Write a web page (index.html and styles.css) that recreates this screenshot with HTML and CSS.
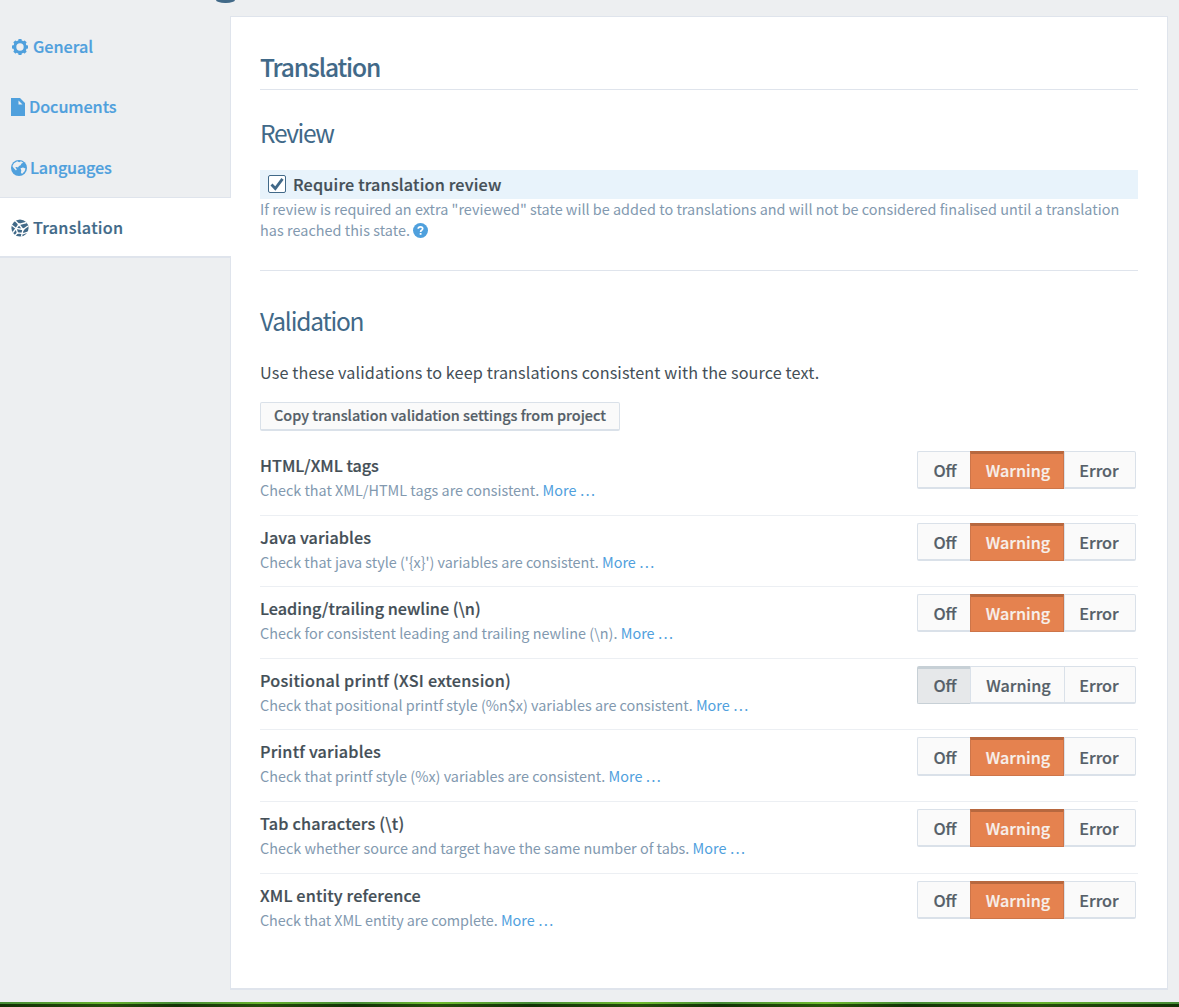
FILE: index.html
```
<!DOCTYPE html>
<html lang="en">
<head>
<meta charset="utf-8">
<title>Translation settings</title>
<link rel="stylesheet" href="styles.css">
</head>
<body>
<div class="page">
  <div class="topbar"><span class="topbar-mark"></span></div>
  <div class="layout">
    <nav class="sidebar">
      <a class="tab"><svg class="icon icon-gear" width="18" height="18" viewBox="0 0 18 18"><g fill="currentColor"><path fill-rule="evenodd" d="M9 2.300a6.700 6.700 0 1 0 0 13.400A6.700 6.700 0 0 0 9 2.300ZM9 5.300a3.700 3.700 0 1 1 0 7.400A3.700 3.700 0 0 1 9 5.300Z"/><g id="teeth"><rect x="7.300" y="1" width="3.400" height="3" rx=".7"/><rect x="7.300" y="14" width="3.400" height="3" rx=".7"/><rect x="1" y="7.300" width="3" height="3.400" rx=".7"/><rect x="14" y="7.300" width="3" height="3.400" rx=".7"/></g><use href="#teeth" transform="rotate(45 9 9)"/></g></svg><span class="label">General</span></a>
      <a class="tab"><svg class="icon icon-doc" width="15" height="18" viewBox="0 0 15 18"><path fill="currentColor" fill-rule="evenodd" d="M0 0h9l5 5v13H0ZM7.500 2.500v4h4Z"/></svg><span class="label t2">Documents</span></a>
      <a class="tab"><svg class="icon icon-globe" width="16" height="16" viewBox="0 0 16 16"><circle cx="8" cy="8" r="8" fill="currentColor"/><path fill="#edeff1" d="M6.200 1.200 8.200 2.200 10 1.300 12.300 2.800 10.500 3.600 9.600 5.200 8 6 7 7.400 5.600 7 4.200 7.600 5.800 9.200 5 10.600 2.600 8 1.400 6 3 3.200ZM9.500 8.200 12 7.600 14.500 8.400 13.600 11.300 11 14 9.900 12.400 10.300 10.600Z"/></svg><span class="label t3">Languages</span></a>
      <a class="tab active"><svg class="icon icon-net" width="18" height="18" viewBox="0 0 18 18"><circle cx="9" cy="9" r="8.600" fill="currentColor"/><g fill="none" stroke="#fff" stroke-width="1.300"><path d="M4 1.500 8 5.500 15.500 3.500M8 5.500 2 13.500M.5 6 5 9.500 12 10.500 17 7M8 5.500 12 10.500 10.500 17.500M5 9.500 6.500 14 12.500 14.500 17 13M6.500 14 3.500 17"/></g><g fill="#fff"><circle cx="8" cy="5.500" r="1.300"/><circle cx="12" cy="10.500" r="1.300"/><circle cx="6.500" cy="14" r="1"/></g></svg><span class="label t4">Translation</span></a>
    </nav>
    <main class="panel">
      <h2 class="title">Translation</h2>
      <h3 class="subtitle review">Review</h3>
      <label class="check-row"><svg width="18" height="18" viewBox="0 0 18 18"><rect x=".5" y=".5" width="17" height="17" rx="1.500" fill="#fff" stroke="#416988"/><path d="M3.500 9.500 7.300 13.500 14.500 3.800" fill="none" stroke="#416988" stroke-width="2.800"/></svg><span class="check-label">Require translation review</span></label>
      <p class="help"><span class="help-one">If review is required an extra "reviewed" state will be added to translations and will not be considered finalised until a translation</span><br><span class="help-two">has reached this state.</span> <svg class="hint" width="15" height="15" viewBox="0 0 15 15"><circle cx="7.500" cy="7.500" r="7.500" fill="#4fa0dd"/><path d="M5.200 5.700Q5.300 3.800 7.500 3.800 9.700 3.800 9.700 5.600 9.700 6.500 8.600 7.200 7.600 7.800 7.600 8.900" fill="none" stroke="#fff" stroke-width="1.700"/><rect x="6.700" y="10" width="1.800" height="1.800" fill="#fff"/></svg></p>
      <h3 class="subtitle validation">Validation</h3>
      <p class="intro">Use these validations to keep translations consistent with the source text.</p>
      <button class="copy"><span>Copy translation validation settings from project</span></button>
      <ul class="rules">
        <li class="rule"><div><h4 class="n1">HTML/XML tags</h4><p><span class="d1">Check that XML/HTML tags are consistent.</span> <a>More …</a></p></div><div class="choice"><span class="off">Off</span><span class="warn on">Warning</span><span class="err">Error</span></div></li>
        <li class="rule"><div><h4 class="n2">Java variables</h4><p><span class="d2">Check that java style ('{x}') variables are consistent.</span> <a>More …</a></p></div><div class="choice"><span class="off">Off</span><span class="warn on">Warning</span><span class="err">Error</span></div></li>
        <li class="rule"><div><h4 class="n3">Leading/trailing newline (\n)</h4><p><span class="d3">Check for consistent leading and trailing newline (\n).</span> <a>More …</a></p></div><div class="choice"><span class="off">Off</span><span class="warn on">Warning</span><span class="err">Error</span></div></li>
        <li class="rule"><div><h4 class="n4">Positional printf (XSI extension)</h4><p><span class="d4">Check that positional printf style (%n$x) variables are consistent.</span> <a>More …</a></p></div><div class="choice"><span class="off on">Off</span><span class="warn">Warning</span><span class="err">Error</span></div></li>
        <li class="rule"><div><h4 class="n5">Printf variables</h4><p><span class="d5">Check that printf style (%x) variables are consistent.</span> <a>More …</a></p></div><div class="choice"><span class="off">Off</span><span class="warn on">Warning</span><span class="err">Error</span></div></li>
        <li class="rule"><div><h4 class="n6">Tab characters (\t)</h4><p><span class="d6">Check whether source and target have the same number of tabs.</span> <a>More …</a></p></div><div class="choice"><span class="off">Off</span><span class="warn on">Warning</span><span class="err">Error</span></div></li>
        <li class="rule"><div><h4 class="n7">XML entity reference</h4><p><span class="d7">Check that XML entity are complete.</span> <a>More …</a></p></div><div class="choice"><span class="off">Off</span><span class="warn on">Warning</span><span class="err">Error</span></div></li>
      </ul>
    </main>
  </div>
  <div class="footer"><div class="footer-edge"></div></div>
</div>
</body>
</html>
```
FILE: styles.css
```
* { box-sizing: border-box; }
body { margin: 0; background: #edeff1; color: #444f57; font-family: "Noto Sans CJK SC", sans-serif; font-size: 16.2px; }
h2, h3, h4, p, ul { margin: 0; padding: 0; }
.page { display: flex; flex-direction: column; height: 1007px; overflow: hidden; }
.topbar { height: 16px; padding-left: 216px; }
.topbar-mark { display: block; width: 19px; height: 3px; background: #416988; border-radius: 0 0 9px 9px / 0 0 3px 3px; }
.layout { display: flex; height: 974px; }
.sidebar { width: 230px; flex: none; }
.tab { display: flex; align-items: center; height: 60px; padding-left: 11px; color: #4fa0dd; font-weight: 500; line-height: 26px; -webkit-text-stroke: .2px; }
.tab:nth-child(3) { height: 61px; }
.tab.active { height: 61px; width: 231px; position: relative; background: #fff; color: #416988; border-top: 1px solid #dfe4ec; border-bottom: 2px solid #dfe4ec; }
.icon { flex: none; margin: 2px 4px 0 0; }
.icon-doc, .icon-globe { margin-right: 3px; }
.t2 { letter-spacing: -.08px; }
.t3 { letter-spacing: -.17px; }
.t4 { letter-spacing: .27px; }
.panel { width: 938px; background: #fff; border: 1px solid #dfe4ec; border-bottom-width: 2px; padding: 32px 29px 0; }
.title { height: 41px; line-height: 36px; font-size: 24.500px; font-weight: 500; letter-spacing: -1.1px; color: #416988; border-bottom: 1px solid #dfe4ec; -webkit-text-stroke: .1px; }
.subtitle { font-size: 24.500px; line-height: 36px; font-weight: 400; letter-spacing: -1.2px; color: #416988; }
.review { margin-top: 25px; letter-spacing: -1.4px; }
.check-row { display: flex; align-items: center; height: 29px; margin-top: 19px; padding: 0 0 1px 8px; gap: 7px; background: #e8f3fb; font-weight: 500; line-height: 26px; -webkit-text-stroke: .2px; }
.check-label { letter-spacing: .18px; }
.help { height: 73px; margin-top: -1px; line-height: 21px; font-size: 14.400px; color: #8299af; white-space: nowrap; }
.help-one { letter-spacing: .018px; }
.help-two { letter-spacing: .05px; }
.hint { vertical-align: -1.5px; }
.validation { border-top: 1px solid #dfe4ec; padding-top: 32px; margin-top: -1px; }
.intro { margin-top: 20px; line-height: 26px; letter-spacing: .125px; }
.copy { display: flex; align-items: center; justify-content: center; width: 360px; height: 29px; margin-top: 17px; padding: 0 0 2px; border: 1px solid #dae1e9; border-bottom-width: 2px; border-radius: 2px; background: #fafafa; color: #555f68; font: 500 14.400px/22px "Noto Sans CJK SC", sans-serif; white-space: nowrap; -webkit-text-stroke: .2px; }
.rules { list-style: none; margin-top: 12px; }
.rule { display: flex; justify-content: space-between; height: 71.600px; padding: 7px 2px 0 0; border-top: 1px solid #eceff3; }
.rule:first-child { border-top-color: transparent; }
.rule h4 { margin-top: 1px; font-size: 16.200px; font-weight: 500; line-height: 26px; -webkit-text-stroke: .2px; }
.n2 { letter-spacing: .08px; }
.n4 { letter-spacing: .25px; }
.n5, .n6 { letter-spacing: .2px; }
.n7 { letter-spacing: .15px; }
.rule p { font-size: 14.400px; line-height: 24px; color: #8299af; white-space: nowrap; }
.d2 { letter-spacing: -.018px; }
.d3 { letter-spacing: .028px; }
.d7 { letter-spacing: -.07px; }
.rule a { color: #4fa0dd; }
.choice { display: flex; width: 219px; height: 38.3px; font-weight: 500; color: #555f68; -webkit-text-stroke: .2px; }
.choice span { display: flex; justify-content: center; align-items: center; background: #fafafa; border: 1px solid #dae1e9; border-bottom-width: 2px; line-height: 26px; padding-top: 1px; }
.choice .off { width: 53px; border-right: 0; border-radius: 2px 0 0 2px; padding-left: 2px; }
.choice .warn { width: 94px; border-right: 0; padding-left: 2px; }
.choice .err { width: 72px; border-radius: 0 2px 2px 0; padding-right: 2px; }
.choice .warn.on { background: #e5824f; border: 1px solid #cd7549; border-top: 3px solid #b7683f; color: #f7f0ec; padding: 0 0 2px 2px; }
.choice .off.on { background: #e6e8ea; border-top: 3px solid #c7d0d6; border-left-color: #c7d0d6; border-bottom: 1px solid #c7d0d6; padding-top: 0; padding-bottom: 2px; }
.footer { height: 5px; margin-top: 12px; background: linear-gradient(90deg, #123004, #254c0b 9%, #133205 15%, #254c0b 22%, #113104 30%, #254c0b 37%, #113104 45%, #254c0b 54%, #113104 61%, #285509 70%, #113104 77%, #254c0b 88%, #113104); }
.footer-edge { height: 2px; background: linear-gradient(90deg, #458a36, #67b32c 9%, #458a36 15%, #67b32c 22%, #458a36 30%, #70bd2d 37%, #458a36 45%, #70bd2d 54%, #458a36 61%, #70bd2d 70%, #458a36 77%, #67b32c 88%, #458a36); }
```
